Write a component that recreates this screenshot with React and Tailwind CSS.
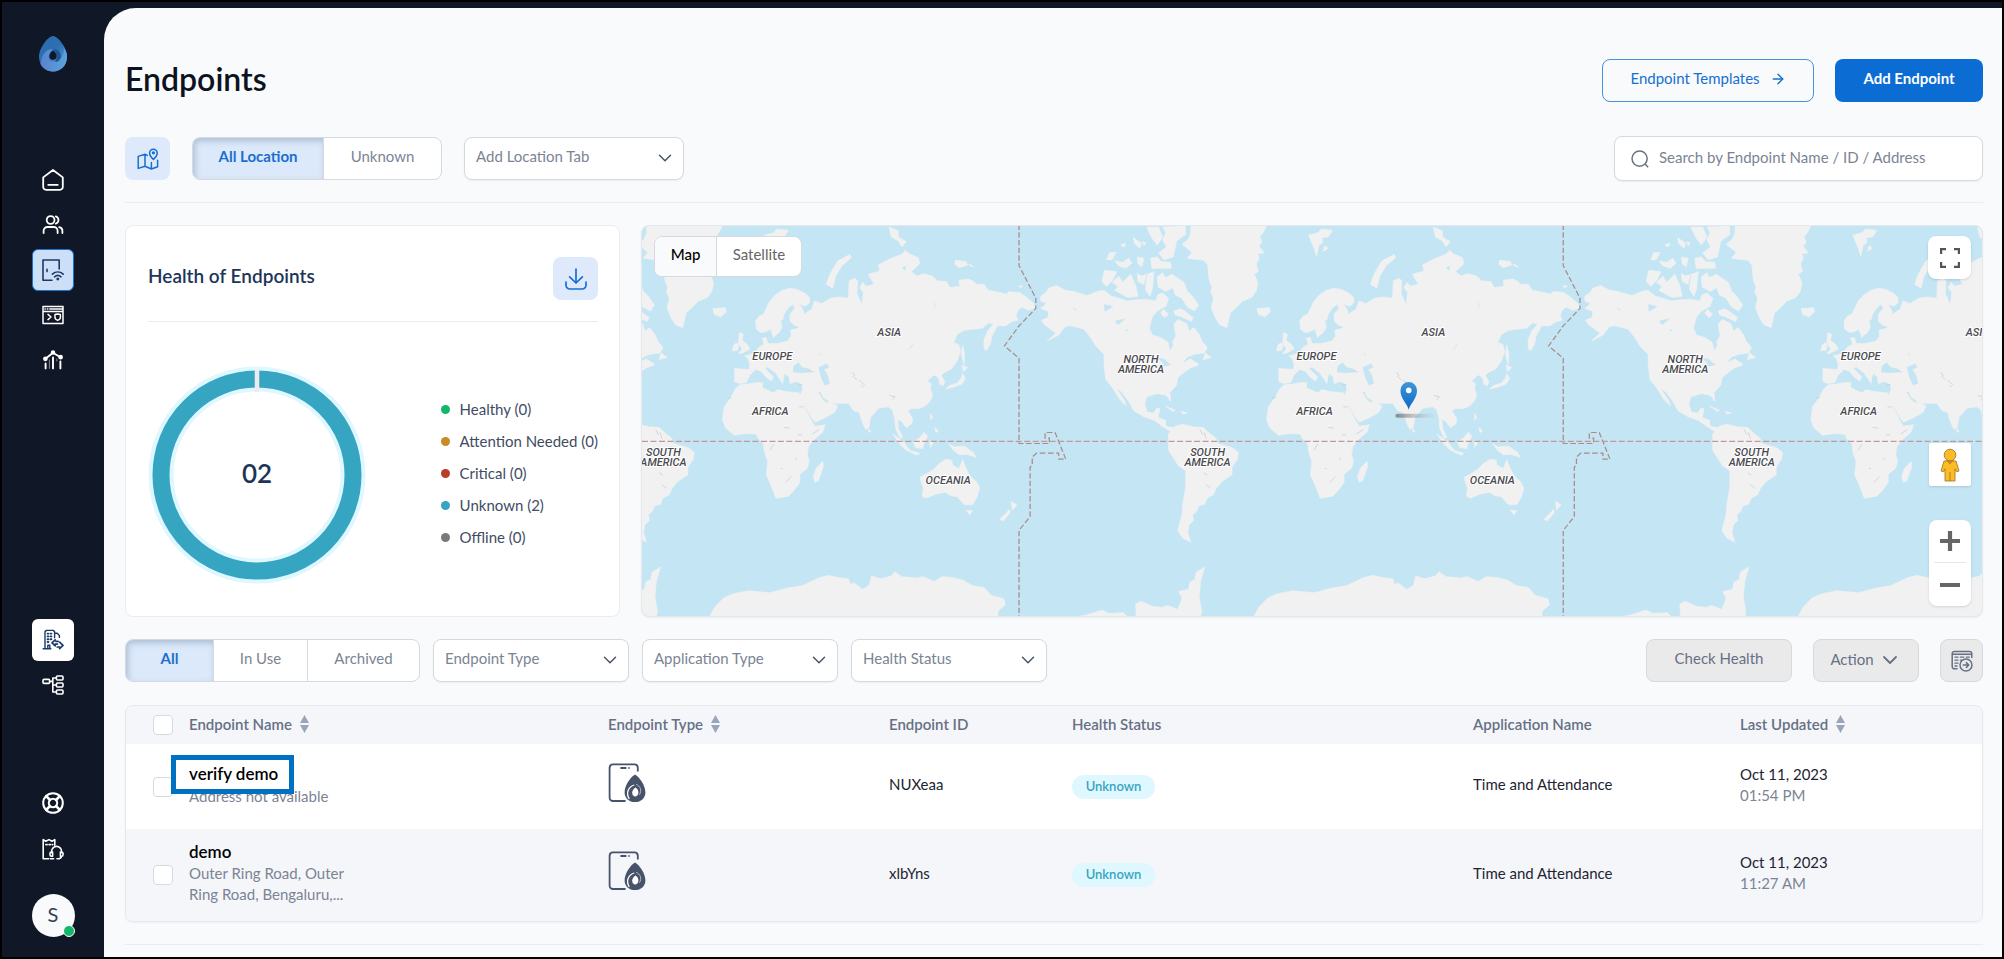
import { useState } from "react";
import { ArrowRight, ChevronDown } from "lucide-react";

const HEALTH = [
  { label: "Healthy", count: 0, dot: "bg-[#12b76a]" },
  { label: "Attention Needed", count: 0, dot: "bg-[#c98b27]" },
  { label: "Critical", count: 0, dot: "bg-[#b93d26]" },
  { label: "Unknown", count: 2, dot: "bg-[#36a5c2]" },
  { label: "Offline", count: 0, dot: "bg-[#7a7a7e]" },
];

const ENDPOINTS = [
  {
    name: "verify demo",
    address: "Address not available",
    id: "NUXeaa",
    date: "Oct 11, 2023",
    time: "01:54 PM",
    highlighted: true,
  },
  {
    name: "demo",
    address: "Outer Ring Road, Outer Ring Road, Bengaluru,...",
    id: "xlbYns",
    date: "Oct 11, 2023",
    time: "11:27 AM",
  },
];

const Icon = ({ children, size = 22, width = 1.8 }) => (
  <svg
    width={size}
    height={size}
    viewBox="0 0 22 22"
    fill="none"
    stroke="currentColor"
    strokeWidth={width}
    strokeLinecap="round"
    strokeLinejoin="round"
    aria-hidden="true"
  >
    {children}
  </svg>
);

const HomeIcon = () => (
  <Icon>
    <path d="M1.2 8.4 11 1l9.8 7.4V18a2.8 2.8 0 0 1-2.8 2.8H4A2.8 2.8 0 0 1 1.2 18zM6.2 15.8h9.6" />
  </Icon>
);

const UsersIcon = () => (
  <Icon>
    <circle cx="8.6" cy="6" r="3.9" />
    <path d="M1.6 19v-2.2a3.8 3.8 0 0 1 3.8-3.8h6.4a3.8 3.8 0 0 1 3.8 3.8V19M13.8 2.3a3.9 3.9 0 0 1 0 7.4M17.2 13.1a3.8 3.8 0 0 1 3.2 3.7V19" />
  </Icon>
);

const DoorWifiIcon = () => (
  <Icon width={1.6}>
    <path d="M17.2 10V1H1v20.2h9M5 10.2v2.4" />
    <path d="M10.4 15.2c3.2-3 7.6-3 10.8 0M12.6 17.8c1.9-1.7 4.500-1.7 6.4 0" />
    <circle cx="15.8" cy="20" r="0.7" fill="currentColor" />
  </Icon>
);

const ConsoleIcon = () => (
  <Icon width={1.5}>
    <path d="M1 2.4h20v17H1zM1 7.4h20M3 5h.4M5.4 5h.4M7.8 5h12" />
    <path d="m6 10.4 3 2.6-3 2.6M13 10.6l2.6-.6 2.8.6v3c0 1.4-1 2.2-2.7 2.8-1.7-.6-2.7-1.4-2.7-2.8z" />
  </Icon>
);

const ChartIcon = () => (
  <Icon width={1.9}>
    <path d="M3.6 14.4V19.4M11 8.4v11M18.4 12.4v7M3.8 9.6 11 3.800l7.4 4.400" />
    <path d="M7.400 11v8.400M14.800 10v2" strokeWidth="1" opacity="0.500" />
    <circle cx="3.4" cy="9.800" r="1.4" fill="currentColor" />
    <circle cx="11" cy="3.600" r="1.3" fill="currentColor" />
    <circle cx="18.6" cy="8.200" r="1.4" fill="currentColor" />
  </Icon>
);

const BuildingIcon = () => (
  <Icon width={1.4}>
    <path d="M3 19.6V2.6L4.4 1.4h6.8l1.4 1.2v6.2M1.2 19.8h7.6M12.8 4.2h2.4l2.2 2.2v2M5.8 19.6v-3.4h2v3.4" />
    <path d="M5.6 4.6h.8M8.6 4.6h.8M5.6 7.4h.8M8.6 7.4h.8M5.6 10.2h.8M8.6 10.2h.8M5.6 13h.8" strokeWidth="1.9" />
    <path d="m13.200 10.800-3.200 3 3.200 3v-1.600h1.800M17.600 13.200l3.400 3.200-3.400 3.200V18h-2.400M14 12.400h2M15.400 15v0" strokeWidth="1.7" />
  </Icon>
);

const TreeIcon = () => (
  <Icon width={1.6}>
    <rect x="1" y="5.4" width="6.6" height="4" rx="1" />
    <rect x="14.4" y="2" width="6.6" height="4" rx="1" />
    <rect x="14.4" y="9" width="6.6" height="4" rx="1" />
    <rect x="14.4" y="16" width="6.6" height="4" rx="1" />
    <path d="M7.6 7.4h3.2M14.4 4h-3.6v14h3.6M10.8 11h3.6" />
  </Icon>
);

const LifebuoyIcon = () => (
  <Icon width={2}>
    <circle cx="11" cy="11" r="9.8" />
    <circle cx="11" cy="11" r="4.2" />
    <path d="m4.2 4.2 3.8 3.8M14 14l3.8 3.8M17.8 4.2 14 8M8 14l-3.8 3.8" strokeWidth="2.6" />
  </Icon>
);

const TicketHeadsetIcon = () => (
  <Icon width={1.6}>
    <path d="M6.6 20.8H1.2V1.6l2.6 1.6L7 1.6l3 1.6 2.8-1.6v5.6M3.8 6.6h1.4M7 6.6h1.4M10.2 6.6h.6M11.6 20.8H8.4" />
    <path d="M9.6 14.6v-1.2a5 5 0 0 1 10 0v1.2M9.8 14h-.4a1.4 1.4 0 0 0-1.4 1.4v1.4a1.4 1.4 0 0 0 1.4 1.4h1.2V14zM18.4 14h1a1.4 1.4 0 0 1 1.6 1.4v1.4a1.4 1.4 0 0 1-1.4 1.4h-1.2zM19.4 18.2c0 1.8-1.8 2.6-4.4 2.6" />
  </Icon>
);

const MapPinIcon = () => (
  <Icon width={1.5}>
    <path d="M10.4 7.4 8 6.2 1.2 8.4v12L8 18.2l6.4 2.8 6.2-2.2V12.2M8 6.2v12M14.4 14.4V21" />
    <path d="M16.4 11.4s-3.8-3.4-3.8-6.4a3.8 3.8 0 0 1 7.6 0c0 3-3.8 6.4-3.8 6.4z" />
    <circle cx="16.4" cy="4.8" r="0.9" />
  </Icon>
);

const DownloadIcon = () => (
  <Icon width={1.7}>
    <path d="M11 1v14M4.600 8.800 11 15l6.400-6.200M1 14v3.200A3.800 3.800 0 0 0 4.800 21h12.400a3.800 3.800 0 0 0 3.800-3.800V14" />
  </Icon>
);

const TableExportIcon = () => (
  <Icon width={1.5}>
    <path d="M6 18.8H3.4A2.2 2.2 0 0 1 1.2 16.6V3.6A2.2 2.2 0 0 1 3.4 1.4h15.2a2.2 2.2 0 0 1 2.2 2.2v4M1.4 4.2h19.2" />
    <path d="M4 7.2h3M9.4 7.2h3.4M15.4 7.2h3M4 10.2h3M9.4 10.2h1.2M4 13.2h3M4 16h2" strokeWidth="1.3" />
    <circle cx="15" cy="15" r="6" />
    <path d="M12.2 15h5.4M15.4 12.6l2.4 2.4-2.4 2.4" />
  </Icon>
);

const SearchIcon = () => (
  <svg width="18" height="18" viewBox="0 0 18 18" fill="none" stroke="currentColor" strokeWidth="1.5" aria-hidden="true">
    <circle cx="8.6" cy="8.6" r="7.6" />
    <path d="m14 14 3.2 3.2" />
  </svg>
);

const DropLogo = () => (
  <svg width="28" height="36" viewBox="0 0 28 36" aria-hidden="true">
    <defs>
      <linearGradient id="drop" x1="0" y1="0" x2="1" y2="1">
        <stop offset="0" stopColor="#2a6cae" />
        <stop offset="0.5" stopColor="#2f6fb4" />
        <stop offset="1" stopColor="#62b0e6" />
      </linearGradient>
      <linearGradient id="dropSwirl" x1="0" y1="0" x2="1" y2="0">
        <stop offset="0" stopColor="#5a82cf" />
        <stop offset="1" stopColor="#5ba3dc" />
      </linearGradient>
    </defs>
    <path d="M14 0c6 1 14 12.500 14 20.500C28 29.500 22 35.400 14 35.400S0 29.500 0 20.500C0 12.500 8 1 14 0z" fill="url(#drop)" />
    <path d="M14 13C8 13 3 17 1.500 28c2.500 5 7 7.400 12.500 7.400 8 0 14-5.900 14-14.900 0-3-1-5-3-8 0 8-4 13-10 13-4 0-6-3-5-6 .6-3 2-4.500 4-6.500z" fill="url(#dropSwirl)" />
    <path d="M14 13c5 0 8 3 8 8-1 3-3 5-6 5 3-4 2-9-2-13z" fill="#1f5690" />
    <path d="M14 14.500c2.400 1.600 3.600 3.600 3.600 5.600a3.600 3.600 0 0 1-7.200 0c0-2 1.200-4 3.600-5.600z" fill="#101726" />
  </svg>
);

const PhoneDropIcon = () => (
  <svg className="block" width="38" height="40" viewBox="0 0 38 40" aria-hidden="true">
    <path
      d="M17.600 38H5a3.400 3.400 0 0 1-3.400-3.400V4.600A3.400 3.400 0 0 1 5 1.400h21.400a3.400 3.400 0 0 1 3.400 3.200v4"
      fill="none"
      stroke="#46536a"
      strokeWidth="1.800"
    />
    <path d="M12.400 5h6M20.400 5h1.200" stroke="#46536a" strokeWidth="1.800" />
    <path d="M27 11.400c4.400 2.400 10.400 11 10.400 18 0 5.600-4.400 9.600-10.400 9.600s-10.400-4-10.400-9.600c0-7 6-15.600 10.400-18z" fill="#46536a" />
    <path d="M27.600 24.400c2.200 1.600 3 3.400 2.800 5.400-.2 2.200-1.600 3.600-3.200 3.800-2-.2-3-1.800-3-3.800 0-2.200 1.200-4 3.400-5.400z" fill="#fff" />
    <path d="M21.200 36c-3.400-5.800-1.200-12 5-14" fill="none" stroke="#fff" strokeWidth="1.300" />
    <path d="M28 21.400c4.600 1.600 6 6 3.400 10.400" fill="none" stroke="#cfd4dc" strokeWidth="0.800" />
  </svg>
);

const SortIcon = () => (
  <svg width="9" height="18" viewBox="0 0 9 18" fill="#98a5ba" aria-hidden="true">
    <path d="M4.500 0 9 8H0zM0 10h9l-4.500 8z" />
  </svg>
);

const LAND =
  "M331 443L372 446 374 430 368 412 360 405 385 398 400 378 414 370 408 352 420 350 424 368 450 368 480 360 490 345 488 328 515 320 498 312 486 300 486 280 500 262 495 250 482 260 470 280 466 296 460 300 464 318 456 335 445 344 440 350 432 325 420 332 405 335 392 325 390 300 400 285 412 280 420 262 430 240 445 222 465 208 485 202 505 205 527 216 540 228 542 245 530 256 512 250 522 264 526 280 548 264 555 240 575 248 600 232 622 228 650 232 652 180 668 172 676 180 674 218 688 252 692 215 682 200 690 184 700 196 722 190 706 160 738 150 734 132 770 112 800 100 810 88 820 98 846 110 850 128 826 152 842 165 862 158 885 165 900 180 925 182 935 200 962 196 960 178 985 174 1000 180 1008 190 1030 190 1042 208 1075 215 1092 220 1100 212 1130 215 1150 230 1168 246 1174 262 1155 268 1136 258 1124 270 1120 285 1125 298 1108 302 1090 315 1068 314 1060 330 1052 345 1048 370 1036 390 1030 382 1030 355 1040 330 1058 308 1042 306 1025 322 1000 325 975 328 955 340 945 365 960 372 964 392 955 420 938 445 918 455 910 464 920 482 916 494 906 490 902 470 890 462 875 476 872 482 882 488 880 502 886 525 878 542 865 556 845 564 828 562 816 570 830 592 828 608 813 620 806 612 798 600 788 596 790 622 802 650 794 650 782 622 780 592 773 566 762 558 748 560 735 562 712 590 708 620 698 626 688 602 680 574 665 570 650 547 622 548 598 544 578 528 572 512 564 512 576 534 588 546 602 542 620 556 612 574 590 588 558 604 550 596 536 570 522 544 514 526 522 506 520 490 505 482 486 488 484 468 472 458 468 470 466 488 456 472 446 456 424 438 416 442 430 458 440 468 434 480 420 470 404 450 390 446 374 462 364 485 345 488 331 482zM345 492L365 490 400 484 410 486 408 500 440 516 452 506 475 512 512 516 522 545 535 575 548 602 556 616 585 612 578 634 552 658 538 678 535 700 540 722 535 742 514 760 514 785 498 808 482 826 447 832 435 798 420 762 424 722 415 695 412 668 398 654 392 640 366 638 330 643 305 620 297 596 302 558 322 528 332 506zM578 722L580 736 566 780 556 784 552 766 560 742zM345 335L355 340 352 358 366 370 374 384 350 398 342 398 352 384 342 366zM335 366L343 370 340 388 325 390 328 374zM270 262L285 262 304 260 308 272 292 288 274 280zM85 14H297L290 30 278 48 284 62 276 76 290 96 272 98 276 112 268 130 274 152 262 158 272 185 268 210 255 230 230 240 210 262 195 276 186 320 166 312 154 292 142 262 148 232 140 212 144 200 136 178 132 132 120 118 75 112 88 94 60 70 76 56 84 38zM415 42L440 36 450 24 482 28 470 48 452 50 454 66 444 72 437 106 430 82 422 62zM460 74L470 82 456 90zM655 100L658 110 632 134 614 166 606 202 588 190 598 160 620 120zM764 18L790 30 790 48 812 62 800 78 790 60 770 48zM950 118L980 122 984 132 960 140 948 130zM988 128L1003 138 990 134zM1128 194L1140 196 1130 200zM775 640L804 662 822 688 850 698 842 703 812 688 796 672zM832 664L848 652 862 634 872 646 862 668 858 684 838 680zM878 660L890 662 880 680zM880 578L886 590 880 598zM892 620L902 630 895 636zM930 668L946 678 975 676 1000 695 1008 710 982 700 960 702 944 688zM850 770L870 758 888 746 905 728 922 716 940 718 942 732 960 744 970 716 978 738 990 764 1010 784 1018 802 1010 830 998 852 975 852 955 828 935 824 922 814 895 820 868 832 857 826 860 802zM980 868L998 870 990 882zM1106 842L1122 852 1110 868zM1100 866L1104 874 1085 900 1074 896 1096 872zM968 432L984 440 972 452zM970 458L978 472 968 490 946 498 922 505 932 494 955 486 966 472zM970 372L976 400 974 430 966 400zM705 624L713 630 708 636zM260 1190L275 1160 300 1132 325 1120 370 1110 430 1116 480 1102 520 1095 570 1070 595 1064 620 1070 650 1074 655 1090 668 1088 690 1106 708 1094 715 1066 740 1074 770 1066 780 1053 800 1068 840 1072 860 1068 890 1082 912 1068 940 1070 970 1078 1000 1096 1030 1100 1050 1124 1085 1134 1090 1152 1070 1170 1068 1190zM-245 1190L-205 1182-165 1168-145 1178-105 1176-90 1190-68 1186-70 1150-55 1142-25 1156 4 1160 20 1154 48 1166 60 1132 50 1112 78 1106 82 1084 96 1076 100 1054 124 1039 112 1080 108 1130 115 1170 112 1190zM22 640L40 616 62 610 90 618 120 620 140 640 155 652 160 668 200 680 218 694 215 715 200 740 200 762 172 782 156 802 148 822 130 832 124 850 106 856 102 870 90 882 92 900 80 912 76 934 84 964 62 952 48 930 54 905 60 880 62 850 70 800 70 750 50 735 35 710 22 688z";

const NORTH_AMERICA =
  "M0 226L16 215 24 202 46 194 75 208 100 212 140 224 175 210 190 208 212 226 235 232 260 240 290 236 320 236 345 240 352 222 366 216 384 232 376 256 350 270 335 288 326 322 335 342 360 350 382 364 388 390 398 374 396 362 406 345 400 310 412 296 438 308 446 330 460 320 475 340 485 362 500 380 492 396 462 400 440 408 424 428 450 414 474 430 448 442 434 452 412 470 408 492 388 515 390 542 378 524 350 518 318 528 312 550 320 574 340 576 348 562 358 564 352 590 374 598 376 616 404 622 390 632 362 614 340 598 310 588 280 570 262 538 242 512 228 504 252 540 256 554 236 534 215 500 195 475 190 430 190 400 165 375 150 350 130 325 90 314 72 318 55 342 20 360 46 336 34 328 10 310 2 298 22 290 24 272 0 262 18 248 0 240zM375 556L404 568 398 572zM420 572L440 576 428 580zM494 396L512 410 488 416zM450 428L474 432 452 440zM215 184L234 166 246 184 270 160 286 196 292 226 262 230 222 208 232 196zM192 148L228 152 216 178 198 196 184 182zM350 168L366 155 374 170 394 160 430 184 440 210 454 224 474 252 462 270 440 258 424 232 404 222 396 200 376 212 352 198zM400 270L420 264 432 270 458 290 452 302 424 288 404 282zM318 18L354 18 366 48 350 72 334 52zM366 18L434 16 436 40 408 60 398 108 370 116 354 96 378 78 366 56 376 36zM330 112L350 108 362 122 390 124 392 142 334 142zM278 50L302 66 298 82 282 68zM206 96L226 94 214 116 198 116zM222 120L246 124 264 112 274 126 256 142 234 134zM290 108L310 112 304 138 292 128zM290 158L304 166 316 160 310 190 292 182zM320 160L340 152 336 200 328 226 314 206zM368 266L384 280 372 290 360 276zM240 72L256 66 250 78zM306 62L316 66 310 74z";

const SEAS =
  "M494 454L496 436 510 424 520 438 542 444 546 454 516 456zM566 440L590 428 596 440 582 446 592 462 598 488 584 494 574 472zM816 392L832 366 830 374zM800 140L812 134 808 150zM890 236L894 258 892 262z";

const NORTH_SEAS =
  "M190 250L218 256 204 266 192 272zM222 300L256 292 232 312zM350 412L368 412 392 432 362 438 366 424zM92 260L108 266 104 268zM254 328L266 326 258 332z";

const CREASES =
  "M660 455l8 6-4 6 10 10M680 478l16 14M686 492l6 8M765 524l16 4-8 8M310 531h12M508 492h12M541 448l12 6M512 558h12M430 688l10-18M474 785l16-18M548 640l20-14M470 620l16 2M508 642h12M110 626l8 16M122 634l6 20M460 742l6 2M500 712l6 6M120 755l10 8M128 792l12 10M570 398l4 4";

const DATELINE =
  "M1131 14V137L1178 235V265L1131 318 1090 378 1131 415V671H1216V655H1204V638H1232L1262 718H1242V700H1180L1168 712V735L1162 742V890L1131 932V1190";

const MAP_LABELS = [
  { x: 675, y: 134, lines: ["EUROPE"] },
  { x: 792, y: 110, lines: ["ASIA"] },
  { x: 673, y: 189, lines: ["AFRICA"] },
  { x: 851, y: 258, lines: ["OCEANIA"] },
  { x: 1044, y: 137, lines: ["NORTH", "AMERICA"] },
  { x: 566, y: 230, lines: ["SOUTH", "AMERICA"] },
];

// one copy of the world is 544.6 units wide
const WORLDS = [-544.6, 0, 544.6];

const visibleLabels = [-1089.2, ...WORLDS].flatMap((dx) =>
  MAP_LABELS.map((label) => ({ ...label, x: label.x + dx })).filter(({ x }) => x > 0 && x < 1341)
);

const WorldMap = () => (
  <svg
    className="absolute inset-0 h-full w-full"
    viewBox="0 0 1341 392"
    preserveAspectRatio="xMinYMin slice"
    aria-label="World map"
  >
    {WORLDS.map((dx) => (
      <g key={dx} transform={`translate(${dx} 0)`}>
        <g transform="translate(519 -5) scale(0.35714 0.33333)">
          <path d={LAND} fill="#f1f1f1" stroke="#f1f1f1" strokeWidth="2" strokeLinejoin="round" />
          <path d={SEAS} fill="#c4e5f3" />
          <path d={CREASES} fill="none" stroke="#c9c9ce" strokeWidth="2" />
        </g>
        <g transform="translate(399 -5) scale(0.33333)">
          <path d={NORTH_AMERICA} fill="#f1f1f1" stroke="#f1f1f1" strokeWidth="2" strokeLinejoin="round" />
          <path d={NORTH_SEAS} fill="#c4e5f3" />
        </g>
        <path
          d={DATELINE}
          transform="translate(518 -6) scale(0.35714 0.33333)"
          fill="none"
          stroke="#a98a8c"
          strokeWidth="3.500"
          strokeDasharray="16 7"
        />
      </g>
    ))}
    <path d="M0 215.500H1341" stroke="#c09a98" strokeWidth="1.300" strokeDasharray="6 2.500" />
    {visibleLabels.map((label) => (
      <text
        key={`${label.x}-${label.y}`}
        textAnchor="middle"
        className="fill-[#4a4a50] stroke-white font-['Roboto',sans-serif] text-[11px] font-medium italic [paint-order:stroke]"
        strokeWidth="2"
      >
        {label.lines.map((line, i) => (
          <tspan key={line} x={label.x} y={label.y + i * 10}>
            {line}
          </tspan>
        ))}
      </text>
    ))}
    <defs>
      <linearGradient id="pin" x1="0" y1="0" x2="0" y2="1">
        <stop offset="0" stopColor="#3f97d8" />
        <stop offset="1" stopColor="#0d66c8" />
      </linearGradient>
      <linearGradient id="pinShadow">
        <stop offset="0" stopColor="#777" stopOpacity="0.8" />
        <stop offset="1" stopColor="#999" stopOpacity="0" />
      </linearGradient>
    </defs>
    <rect x="754" y="188" width="40" height="4" rx="2" fill="url(#pinShadow)" />
    <path
      d="M767.300 184c-1-6-8.300-11-8.300-19.500a8.300 8.300 0 0 1 16.600 0c0 8.500-7.300 13.500-8.300 19.500z"
      fill="url(#pin)"
    />
    <circle cx="767.300" cy="164.500" r="2.800" fill="#fff" />
  </svg>
);

const Pegman = () => (
  <svg width="20" height="34" viewBox="0 0 20 34" fill="#fbbc24" stroke="#a87b32" strokeWidth="0.900" aria-hidden="true">
    <path d="M4 13h12l3 10-2.600.8-1.400-3V33H5V20.800l-1.400 3L1 23z" />
    <path d="M10 24v9" />
    <path d="M6 12h8l-4 4.500z" fill="#c88a1c" stroke="none" />
    <circle cx="10" cy="7" r="5.800" />
  </svg>
);

const SelectBox = ({ label, className }) => (
  <div className={`relative ${className}`}>
    <select
      aria-label={label}
      className="h-[43px] w-full appearance-none rounded-lg border border-[#d5d9e0] bg-white pr-9 pb-1 pl-[11px] text-[#7b8494] shadow-xs"
    >
      <option>{label}</option>
    </select>
    <ChevronDown className="pointer-events-none absolute top-2.5 right-2 text-[#475467]" size={22} strokeWidth={1.6} />
  </div>
);

const Segmented = ({ items, active, onChange }) => (
  <div className="flex h-[43px] overflow-hidden rounded-lg border border-[#d5d9e0] bg-white">
    {items.map((item) => (
      <button
        key={item.label}
        type="button"
        onClick={() => onChange(item.label)}
        className={`border-r border-[#d5d9e0] pb-1 last:border-r-0 ${item.width} ${
          active === item.label
            ? "bg-[#dce9fa] font-bold text-[#1a6fcf] shadow-[inset_2px_3px_6px_rgba(80,110,140,0.35)]"
            : "text-[#7b8494]"
        }`}
      >
        {item.label}
      </button>
    ))}
  </div>
);

const SideButton = ({ label, className = "text-white", children }) => (
  <button type="button" aria-label={label} className={`flex size-[42px] items-center justify-center rounded-md ${className}`}>
    {children}
  </button>
);

const Sidebar = () => (
  <aside className="flex w-[102px] shrink-0 flex-col items-center pt-[34px] pb-5">
    <DropLogo />
    <nav className="mt-[87px] flex flex-col gap-[3px]">
      <SideButton label="Home"><HomeIcon /></SideButton>
      <SideButton label="Users"><UsersIcon /></SideButton>
      <SideButton label="Endpoints" className="border border-[#1a72d2] bg-[#cddff6] text-[#1d3a66]">
        <DoorWifiIcon />
      </SideButton>
      <SideButton label="Console"><ConsoleIcon /></SideButton>
      <SideButton label="Reports"><ChartIcon /></SideButton>
    </nav>
    <div className="mt-auto flex flex-col gap-[3px]">
      <SideButton label="Organisation" className="bg-white text-[#1d3a66]"><BuildingIcon /></SideButton>
      <SideButton label="Hierarchy"><TreeIcon /></SideButton>
    </div>
    <div className="mt-[76px] flex flex-col gap-1">
      <SideButton label="Help"><LifebuoyIcon /></SideButton>
      <SideButton label="Support"><TicketHeadsetIcon /></SideButton>
    </div>
    <button
      type="button"
      className="relative mt-6 size-[43px] rounded-full bg-[#f9fafc] pb-0.5 text-[20px] text-[#344054]"
    >
      S
      <span className="absolute right-0 bottom-0 size-3 rounded-full border border-white bg-[#12b76a]"></span>
    </button>
  </aside>
);

const HealthCard = () => (
  <section className="w-[495px] shrink-0 rounded-lg border border-[#ececf0] bg-white pt-[31px] pr-[21px] pl-[22px]">
    <div className="flex h-[65px] items-start justify-between border-b border-[#ececf0]">
      <h2 className="pt-2 text-[19px] font-semibold text-[#1d3557]">Health of Endpoints</h2>
      <button type="button" aria-label="Download" className="flex h-[43px] w-[45px] items-center justify-center rounded-lg bg-[#deeafc] text-[#1570d1]">
        <DownloadIcon />
      </button>
    </div>
    <div className="mt-11 flex items-center justify-between">
      <div className="relative size-[218px]">
        <svg viewBox="0 0 218 218" className="size-full" fill="none" aria-hidden="true">
          <circle cx="109" cy="109" r="96" stroke="#dff7fe" strokeWidth="25" />
          <circle cx="109" cy="109" r="96" stroke="#36a5c2" strokeWidth="17" />
          <path d="M109 4v22" stroke="#ececf0" strokeWidth="4.500" />
        </svg>
        <span className="absolute inset-0 flex items-center justify-center pb-1 text-[26px] font-semibold text-[#1d3557]">02</span>
      </div>
      <ul className="flex flex-col gap-2 pb-1">
        {HEALTH.map((item) => (
          <li key={item.label} className="flex h-6 items-center gap-2.5 text-[#3f4c63]">
            <span className={`size-[9px] rounded-full ${item.dot}`}></span>
            {item.label} ({item.count})
          </li>
        ))}
      </ul>
    </div>
  </section>
);

const MapPanel = () => (
  <section className="relative min-w-0 flex-1 overflow-hidden rounded-lg border border-[#e4e7ec] bg-[#c4e5f3] shadow-xs">
    <WorldMap />
    <div className="absolute top-2.5 left-3 flex h-[41px] overflow-hidden rounded-lg border border-[#d5d9e0] bg-white">
      <button type="button" className="w-[62px] border-r border-[#d5d9e0] bg-[#f9fafc] pb-1 font-medium text-black">Map</button>
      <button type="button" className="w-[84px] pb-1 text-[#666]">Satellite</button>
    </div>
    <button type="button" aria-label="Full screen" className="absolute top-2.5 right-[11px] flex size-[43px] items-center justify-center rounded-lg bg-white shadow-sm">
      <svg width="20" height="20" viewBox="0 0 20 20" fill="none" stroke="#555" strokeWidth="2.200">
        <path d="M1.100 6V1.100H6M14 1.100h4.900V6M18.900 14v4.900H14M6 18.900H1.100V14" />
      </svg>
    </button>
    <button type="button" aria-label="Street view" className="absolute right-[11px] bottom-[130px] flex h-[43px] w-[42px] items-center justify-center rounded-xs bg-white shadow-sm">
      <Pegman />
    </button>
    <div className="absolute right-[11px] bottom-2.5 flex w-[42px] flex-col items-center rounded-lg bg-white shadow-sm">
      <button type="button" aria-label="Zoom in" className="flex h-[43px] w-8 items-center justify-center border-b border-[#e6e6e6]">
        <svg width="20" height="20" viewBox="0 0 20 20" stroke="#666" strokeWidth="4.200"><path d="M0 10h20M10 0v20" /></svg>
      </button>
      <button type="button" aria-label="Zoom out" className="flex h-[43px] w-8 items-center justify-center">
        <svg width="20" height="20" viewBox="0 0 20 20" stroke="#666" strokeWidth="4.200"><path d="M0 10h20" /></svg>
      </button>
    </div>
  </section>
);

const Checkbox = ({ label }) => (
  <input type="checkbox" aria-label={label} className="block size-5 appearance-none rounded-sm border border-[#d5d9e0] bg-white" />
);

const EndpointsTable = () => (
  <div className="mt-[23px] overflow-hidden rounded-lg border border-[#e4e7ec] shadow-xs">
    <table className="w-full table-fixed text-left">
      <colgroup>
        <col className="w-[63px]" />
        <col className="w-[419px]" />
        <col className="w-[281px]" />
        <col className="w-[183px]" />
        <col className="w-[401px]" />
        <col className="w-[267px]" />
        <col />
      </colgroup>
      <thead className="bg-[#f5f6fa] text-[#667085]">
        <tr className="h-[38px]">
          <th className="pl-[27px]"><Checkbox label="Select all endpoints" /></th>
          <th className="pb-0.5 font-semibold">
            <span className="flex items-center gap-2">Endpoint Name <SortIcon /></span>
          </th>
          <th className="pb-0.5 font-semibold">
            <span className="flex items-center gap-2">Endpoint Type <SortIcon /></span>
          </th>
          <th className="pb-0.5 font-semibold">Endpoint ID</th>
          <th className="pb-0.5 font-semibold">Health Status</th>
          <th className="pb-0.5 font-semibold">Application Name</th>
          <th className="pb-0.5 font-semibold">
            <span className="flex items-center gap-2">Last Updated <SortIcon /></span>
          </th>
        </tr>
      </thead>
      <tbody className="text-[#1d2433]">
        {ENDPOINTS.map((endpoint) => (
          <tr key={endpoint.id} className="h-[85px] bg-white even:h-[92px] even:bg-[#f5f6fa]">
            <td className="pl-[27px]"><Checkbox label={`Select ${endpoint.name}`} /></td>
            <td className="pb-1">
              <div className="relative w-[170px]">
                {endpoint.highlighted ? (
                  <a
                    href="#verify-demo"
                    className="relative -my-2 -ml-[18px] flex h-[39px] w-[123px] items-center border-5 border-[#0070c0] bg-white pb-0.5 pl-[13px] text-[17px] whitespace-nowrap font-semibold text-black"
                  >
                    {endpoint.name}
                  </a>
                ) : (
                  <p className="text-[17px] leading-[22px] font-semibold text-black">{endpoint.name}</p>
                )}
                <p className="text-[#7b8494]">{endpoint.address}</p>
              </div>
            </td>
            <td className="pb-2"><PhoneDropIcon /></td>
            <td className="pb-1">{endpoint.id}</td>
            <td>
              <span className="inline-block h-6 w-[83px] rounded-full bg-[#dff7fe] text-center text-[13px] leading-[23px] font-semibold text-[#36a5c2]">Unknown</span>
            </td>
            <td className="pb-1">Time and Attendance</td>
            <td className="pb-1">
              <p>{endpoint.date}</p>
              <p className="text-[#7b8494]">{endpoint.time}</p>
            </td>
          </tr>
        ))}
      </tbody>
    </table>
  </div>
);

const App = () => {
  const [location, setLocation] = useState("All Location");
  const [status, setStatus] = useState("All");

  return (
    <div className="flex min-h-screen border-2 border-black bg-[#101726] font-['Lato',sans-serif] text-[15px] leading-[21px]">
      <Sidebar />
      <main className="mt-1.5 min-w-0 flex-1 rounded-tl-[32px] bg-[#f9fafc] pt-[51px] pr-[19px] pl-[21px]">
        <header className="flex items-center justify-between">
          <h1 className="pb-1 text-[32px] leading-[39px] font-semibold text-[#0c1220]">Endpoints</h1>
          <div className="flex gap-[21px]">
            <button type="button" className="flex h-[43px] w-[212px] items-center justify-center gap-2.5 rounded-lg border border-[#4a90dc] pb-1 text-[#1570d1]">
              Endpoint Templates
              <ArrowRight size={16} strokeWidth={2.2} />
            </button>
            <button type="button" className="h-[43px] w-[148px] rounded-lg bg-[#0b6dd3] pb-1 font-bold text-white">
              Add Endpoint
            </button>
          </div>
        </header>

        <div className="mt-[34px] flex items-center justify-between border-b border-[#ececf0] pb-[21px]">
          <div className="flex items-center gap-[22px]">
            <button type="button" aria-label="Toggle map" className="flex h-[43px] w-[45px] items-center justify-center rounded-lg bg-[#deeafc] text-[#1570d1]">
              <MapPinIcon />
            </button>
            <Segmented
              items={[
                { label: "All Location", width: "w-[131px]" },
                { label: "Unknown", width: "w-[117px]" },
              ]}
              active={location}
              onChange={setLocation}
            />
            <SelectBox label="Add Location Tab" className="w-[220px]" />
          </div>
          <label className="flex h-[45px] w-[369px] items-center gap-2.5 rounded-lg border border-[#d5d9e0] bg-white pl-4 text-[#6b7280] shadow-xs">
            <SearchIcon />
            <input
              type="search"
              aria-label="Search"
              placeholder="Search by Endpoint Name / ID / Address"
              className="min-w-0 flex-1 pb-0.5 outline-none placeholder:text-[#7b8494]"
            />
          </label>
        </div>

        <div className="mt-[22px] flex h-[392px] items-stretch gap-[21px]">
          <HealthCard />
          <MapPanel />
        </div>

        <div className="mt-[22px] flex items-center justify-between">
          <div className="flex gap-[13px]">
            <Segmented
              items={[
                { label: "All", width: "w-[88px]" },
                { label: "In Use", width: "w-[94px]" },
                { label: "Archived", width: "w-[111px]" },
              ]}
              active={status}
              onChange={setStatus}
            />
            <SelectBox label="Endpoint Type" className="w-[196px]" />
            <SelectBox label="Application Type" className="w-[196px]" />
            <SelectBox label="Health Status" className="w-[196px]" />
          </div>
          <div className="flex gap-[21px] text-[#667085]">
            <button type="button" className="h-[43px] w-[146px] rounded-lg border border-[#d5d9e0] bg-[#ebeaeb] pb-1">Check Health</button>
            <button type="button" className="flex h-[43px] w-[106px] items-center justify-center gap-1 rounded-lg border border-[#d5d9e0] bg-[#ebeaeb] pb-0.5">
              Action
              <ChevronDown size={24} strokeWidth={1.8} />
            </button>
            <button type="button" aria-label="Export" className="flex h-[43px] w-[43px] items-center justify-center rounded-lg border border-[#d5d9e0] bg-[#ebeaeb]">
              <TableExportIcon />
            </button>
          </div>
        </div>

        <EndpointsTable />
        <hr className="mt-[22px] border-[#ececf0]" />
      </main>
    </div>
  );
};

export default App;
